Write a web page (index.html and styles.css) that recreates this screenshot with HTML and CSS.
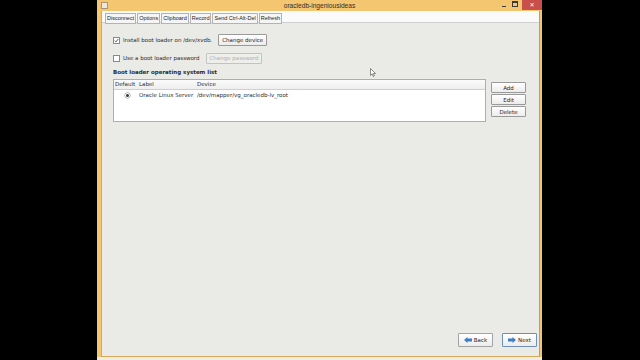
FILE: index.html
```html
<!DOCTYPE html>
<html>
<head>
<meta charset="utf-8">
<title>oracledb-ingeniousideas</title>
<link rel="stylesheet" href="styles.css">
</head>
<body>

<div class="window">
	<div class="titlebar">
		<span class="appicon"></span>
		<span class="title">oracledb-ingeniousideas</span>
		<span class="winctl">
			<span class="minbtn"></span>
			<span class="maxbtn"></span>
			<span class="closebtn">&#x2715;</span>
		</span>
	</div>
	<div class="frame">
		<div class="toolbar">
			<span class="tbtn">Disconnect</span>
			<span class="tbtn">Options</span>
			<span class="tbtn">Clipboard</span>
			<span class="tbtn">Record</span>
			<span class="tbtn">Send Ctrl-Alt-Del</span>
			<span class="tbtn">Refresh</span>
		</div>
		<div class="content">
			<div class="optrow">
				<span class="check checked">
					<svg width="5" height="5" viewBox="0 0 5 5"><path d="M0.8 2.6 L2 3.8 L4.3 1" fill="none" stroke="#333" stroke-width="0.8"/></svg>
				</span>
				<span class="optlabel">Install boot loader on /dev/xvdb.</span>
				<span class="btn">Change device</span>
			</div>
			<div class="optrow second">
				<span class="check"></span>
				<span class="optlabel">Use a boot loader password</span>
				<span class="btn disabled">Change password</span>
			</div>
			<div class="heading">Boot loader operating system list</div>
			<div class="listarea">
				<div class="oslist">
					<div class="listhead">
						<span class="col-default">Default</span>
						<span class="col-label">Label</span>
						<span class="col-device">Device</span>
					</div>
					<div class="listrow">
						<span class="col-default"><span class="radio"></span></span>
						<span class="col-label">Oracle Linux Server</span>
						<span class="col-device">/dev/mapper/vg_oracledb-lv_root</span>
					</div>
				</div>
				<div class="sidebtns">
					<span class="btn small">Add</span>
					<span class="btn small">Edit</span>
					<span class="btn small">Delete</span>
				</div>
			</div>
			<div class="footer">
				<span class="btn navbtn">
					<svg width="8" height="6" viewBox="0 0 8 6"><path d="M0 3 L3.5 0 L3.5 1.6 L8 1.6 L8 4.4 L3.5 4.4 L3.5 6 Z" fill="#3d7fc4"/></svg>
					Back
				</span>
				<span class="btn navbtn default">
					<svg width="8" height="6" viewBox="0 0 8 6"><path d="M8 3 L4.5 0 L4.5 1.6 L0 1.6 L0 4.4 L4.5 4.4 L4.5 6 Z" fill="#3d7fc4"/></svg>
					Next
				</span>
			</div>
			<svg class="cursor" width="6" height="9" viewBox="0 0 6 9"><path d="M0.5 0.5 L0.5 7.5 L2.2 5.9 L3.4 8.5 L4.4 8 L3.3 5.5 L5.5 5.5 Z" fill="#fff" stroke="#444" stroke-width="0.6"/></svg>
		</div>
	</div>
</div>
<div class="belowstrip"></div>

</body>
</html>
```

FILE: styles.css
```css
body {
	margin:0;
	background:#000;
	width:640px;
	height:360px;
	overflow:hidden;
}
.window {
	margin-left:97px;
	width:445px;
	height:357px;
	display:flex;
	flex-direction:column;
	background:#f3c66f;
}
.belowstrip {
	margin-left:97px;
	width:445px;
	height:3px;
	background:#f1ece1;
}
.titlebar {
	height:11px;
	position:relative;
	display:flex;
	align-items:center;
	justify-content:center;
	flex-shrink:0;
}
.appicon {
	position:absolute;
	left:4px;
	top:2px;
	width:5px;
	height:5px;
	background:#ece8df;
	border:1px solid #a8957a;
}
.title {
	font-family:"Liberation Sans", Arial, sans-serif;
	font-size:6.6px;
	color:#2f2f2f;
}
.winctl {
	position:absolute;
	right:0;
	top:0;
	display:flex;
	align-items:flex-start;
}
.minbtn {
	width:4px;
	height:1px;
	background:#3a3a3a;
	margin-top:6px;
	margin-right:6px;
}
.maxbtn {
	width:4px;
	height:3px;
	border:1px solid #3a3a3a;
	border-top-width:2px;
	margin-top:1px;
	margin-right:4px;
}
.closebtn {
	width:20px;
	height:10px;
	background:#c9504a;
	color:#fff;
	font-family:"DejaVu Sans", sans-serif;
	font-size:6px;
	line-height:10px;
	text-align:center;
}
.frame {
	flex:1;
	display:flex;
	flex-direction:column;
	margin:0 2px 0 4px;
	border-left:1px solid #d7a95a;
	border-right:1px solid #c89a52;
	border-bottom:1px solid #d7a95a;
	background:#eaeae6;
}
.toolbar {
	height:12px;
	flex-shrink:0;
	background:#fafafa;
	border-bottom:1px solid #cfcfcf;
	box-sizing:border-box;
	display:flex;
	align-items:flex-start;
	gap:1px;
	padding:2px 0 0 3px;
}
.tbtn {
	font-family:"Liberation Sans", Arial, sans-serif;
	font-size:5.5px;
	color:#222;
	height:9px;
	line-height:9px;
	padding:0 1px;
	background:#f5f5f5;
	border:1px solid #b3b3b3;
}
.content {
	flex:1;
	position:relative;
	display:flex;
	flex-direction:column;
	padding:11px 2px 9px 11px;
	font-family:"DejaVu Sans", sans-serif;
	font-size:5.5px;
	color:#2c2c2c;
}
.optrow {
	display:flex;
	align-items:center;
	height:12px;
}
.optrow.second {
	margin-top:6px;
}
.check {
	width:5px;
	height:5px;
	border:1px solid #8a8a8a;
	background:#fff;
	margin-right:3px;
	display:flex;
}
.optlabel {
	margin-right:6px;
}
.btn {
	display:flex;
	align-items:center;
	justify-content:center;
	box-sizing:border-box;
	border:1px solid #9a9a9a;
	border-radius:1px;
	background:linear-gradient(#ffffff, #ececec);
	color:#222;
	height:12px;
	padding:0 3px;
}
.btn.disabled {
	border-color:#c3c3c3;
	color:#b0b0b0;
	background:#eeeeea;
	height:11px;
}
.heading {
	font-weight:bold;
	margin-top:4px;
	height:8px;
	line-height:8px;
}
.listarea {
	display:flex;
	margin-top:3px;
	padding-right:11px;
}
.oslist {
	flex:1;
	height:43px;
	box-sizing:border-box;
	border:1px solid #aeaeae;
	background:#fff;
}
.listhead {
	display:flex;
	height:9px;
	line-height:9px;
	background:linear-gradient(#fbfbfb, #eeeeee);
	border-bottom:1px solid #d0d0d0;
}
.listrow {
	display:flex;
	height:11px;
	line-height:11px;
	align-items:center;
}
.col-default {
	width:24px;
	padding-left:1px;
	display:flex;
	align-items:center;
	justify-content:center;
}
.listhead .col-default {
	justify-content:flex-start;
}
.col-label {
	width:58px;
}
.radio {
	width:3px;
	height:3px;
	border-radius:50%;
	background:#333;
	box-shadow:0 0 0 1px #fff, 0 0 0 1.5px #8d8d8d;
}
.sidebtns {
	display:flex;
	flex-direction:column;
	gap:1px;
	margin-left:5px;
	margin-top:3px;
}
.btn.small {
	width:35px;
	height:11px;
	padding:0;
}
.footer {
	margin-top:auto;
	display:flex;
	justify-content:flex-end;
	gap:9px;
}
.btn.navbtn {
	width:35px;
	height:14px;
	gap:2px;
	padding:0;
	border-color:#a3a3a3;
}
.btn.navbtn.default {
	border-color:#6f8fb5;
}
.cursor {
	position:absolute;
	left:268px;
	top:45px;
}
```
